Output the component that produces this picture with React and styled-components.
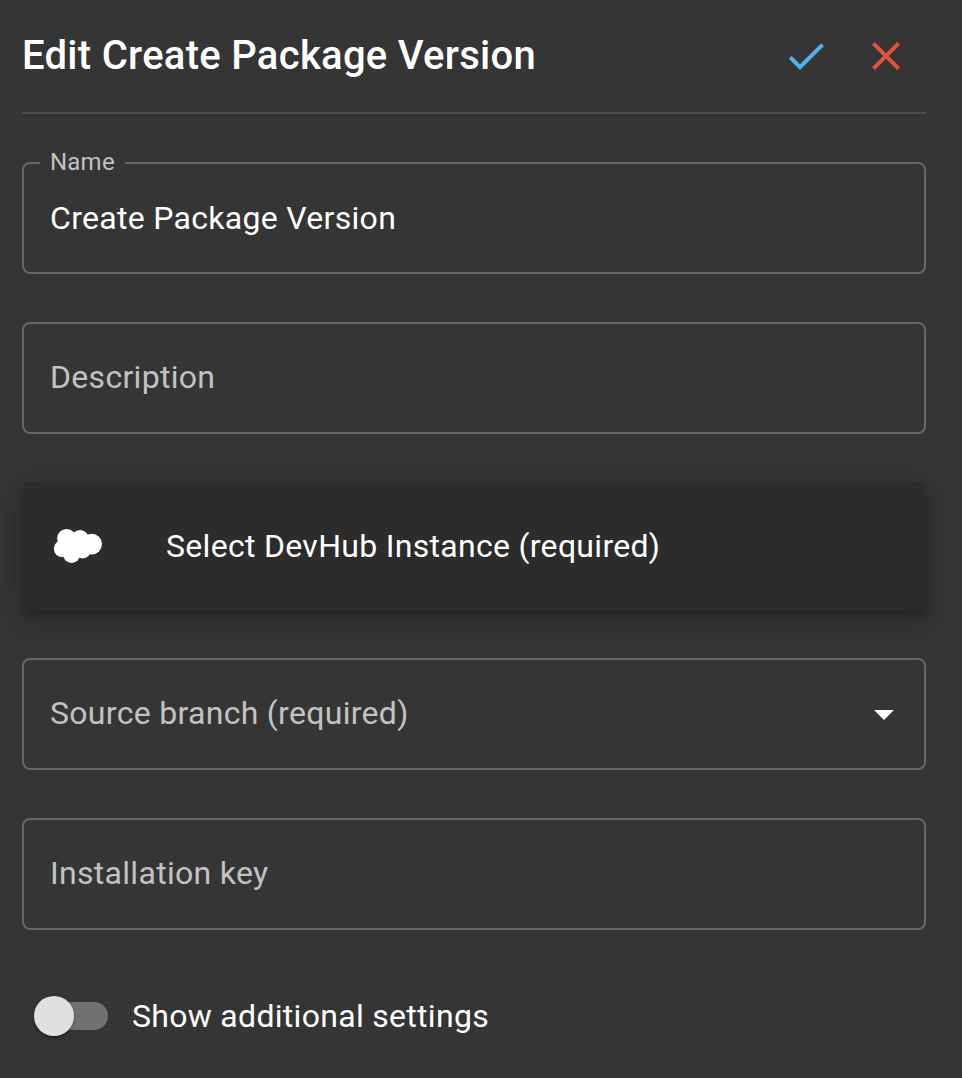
import React from 'react';
import styled, { createGlobalStyle } from 'styled-components';

const GlobalStyle = createGlobalStyle`
  * { box-sizing: border-box; }
  body { margin: 0; background: #353535; font-family: Roboto, sans-serif; color: #fff; }
`;

const Panel = styled.main`
  width: 962px;
  height: 1078px;
  padding: 0 36px 0 22px;
  background: #353535;
  overflow: hidden;
`;

const Header = styled.header`
  display: flex;
  align-items: center;
  height: 114px;
  border-bottom: 2px solid #4e4e4e;
`;

const Title = styled.h1`
  flex: 1;
  margin: 0;
  font-size: 40px;
  line-height: 64px;
  font-weight: 500;
  letter-spacing: 0.29px;
  white-space: nowrap;
`;

const IconButton = styled.button`
  display: flex;
  align-items: center;
  justify-content: center;
  width: 80px;
  height: 80px;
  padding: 0;
  border: 0;
  background: none;
  color: ${({ $color }) => $color};
`;

const Form = styled.div`
  display: flex;
  flex-direction: column;
  gap: 48px;
  padding-top: 48px;
`;

const Field = styled.div`
  position: relative;
  display: flex;
  align-items: center;
  justify-content: space-between;
  height: 112px;
  padding: 0 16px 0 26px;
  border: 2px solid #686868;
  border-radius: 8px;
`;

const Text = styled.span`
  font-size: 32px;
  line-height: 48px;
  letter-spacing: 0.3px;
  padding-bottom: ${({ $muted }) => ($muted ? '2px' : '0')};
  color: ${({ $muted }) => ($muted ? '#c2c2c2' : '#fff')};
  white-space: nowrap;
`;

const FloatingLabel = styled.span`
  position: absolute;
  top: -18px;
  left: 16px;
  width: 85px;
  padding: 0 10px;
  background: #353535;
  font-size: 24px;
  line-height: 32px;
  letter-spacing: 0.22px;
  color: #c2c2c2;
`;

const InstanceButton = styled.button`
  display: flex;
  align-items: center;
  gap: 60px;
  height: 128px;
  padding: 0 28px;
  border: 0;
  border-radius: 8px;
  background: #2c2c2c;
  color: #fff;
  font-family: inherit;
  text-align: left;
  box-shadow: 0 6px 10px -2px rgba(0, 0, 0, 0.2), 0 12px 20px rgba(0, 0, 0, 0.14), 0 2px 36px rgba(0, 0, 0, 0.12);
`;

const SwitchRow = styled.label`
  display: flex;
  align-items: center;
  gap: 24px;
  height: 76px;
  padding-left: 12px;
`;

const Track = styled.span`
  display: flex;
  align-items: center;
  width: 74px;
  height: 28px;
  border-radius: 14px;
  background: linear-gradient(#717171, #717171) right / 72px 28px no-repeat;
`;

const Thumb = styled.span`
  flex: none;
  width: 40px;
  height: 40px;
  border-radius: 50%;
  background: #e0e0e0;
  box-shadow: 0 4px 2px -2px rgba(0, 0, 0, 0.2), 0 2px 2px rgba(0, 0, 0, 0.14), 0 2px 6px rgba(0, 0, 0, 0.12);
`;

const CheckIcon = () => (
  <svg width="48" height="48" viewBox="0 0 24 24" fill="currentColor">
    <path d="M9 16.17 4.83 12l-1.42 1.41L9 19 21 7l-1.41-1.41z" />
  </svg>
);

const CloseIcon = () => (
  <svg width="48" height="48" viewBox="0 0 24 24" fill="currentColor">
    <path d="M19 6.41 17.59 5 12 10.59 6.41 5 5 6.41 10.59 12 5 17.59 6.41 19 12 13.41 17.59 19 19 17.59 13.41 12z" />
  </svg>
);

const CloudIcon = () => (
  <svg width="56" height="56" viewBox="0 0 56 56" fill="currentColor">
    <circle cx="16.6" cy="20.5" r="9.5" />
    <circle cx="30" cy="21" r="9" />
    <circle cx="41.7" cy="26.1" r="10.3" />
    <circle cx="12.2" cy="30.7" r="8.4" />
    <circle cx="21.6" cy="36.1" r="8.8" />
    <circle cx="32.7" cy="32.2" r="8.2" />
    <circle cx="24" cy="27" r="9" />
  </svg>
);

export default function App() {
  return (
    <>
      <GlobalStyle />
      <Panel>
        <Header>
          <Title>Edit Create Package Version</Title>
          <IconButton $color="#56b0ee" aria-label="Save"><CheckIcon /></IconButton>
          <IconButton $color="#e25241" aria-label="Cancel"><CloseIcon /></IconButton>
        </Header>
        <Form>
          <Field>
            <FloatingLabel>Name</FloatingLabel>
            <Text>Create Package Version</Text>
          </Field>
          <Field><Text $muted>Description</Text></Field>
          <InstanceButton>
            <CloudIcon />
            <Text>Select DevHub Instance (required)</Text>
          </InstanceButton>
          <Field>
            <Text $muted>Source branch (required)</Text>
            <svg width="48" height="48" viewBox="0 0 24 24" fill="#fff"><path d="m7 10 5 5 5-5z" /></svg>
          </Field>
          <Field><Text $muted>Installation key</Text></Field>
          <SwitchRow>
            <Track><Thumb /></Track>
            <Text>Show additional settings</Text>
          </SwitchRow>
        </Form>
      </Panel>
    </>
  );
}
